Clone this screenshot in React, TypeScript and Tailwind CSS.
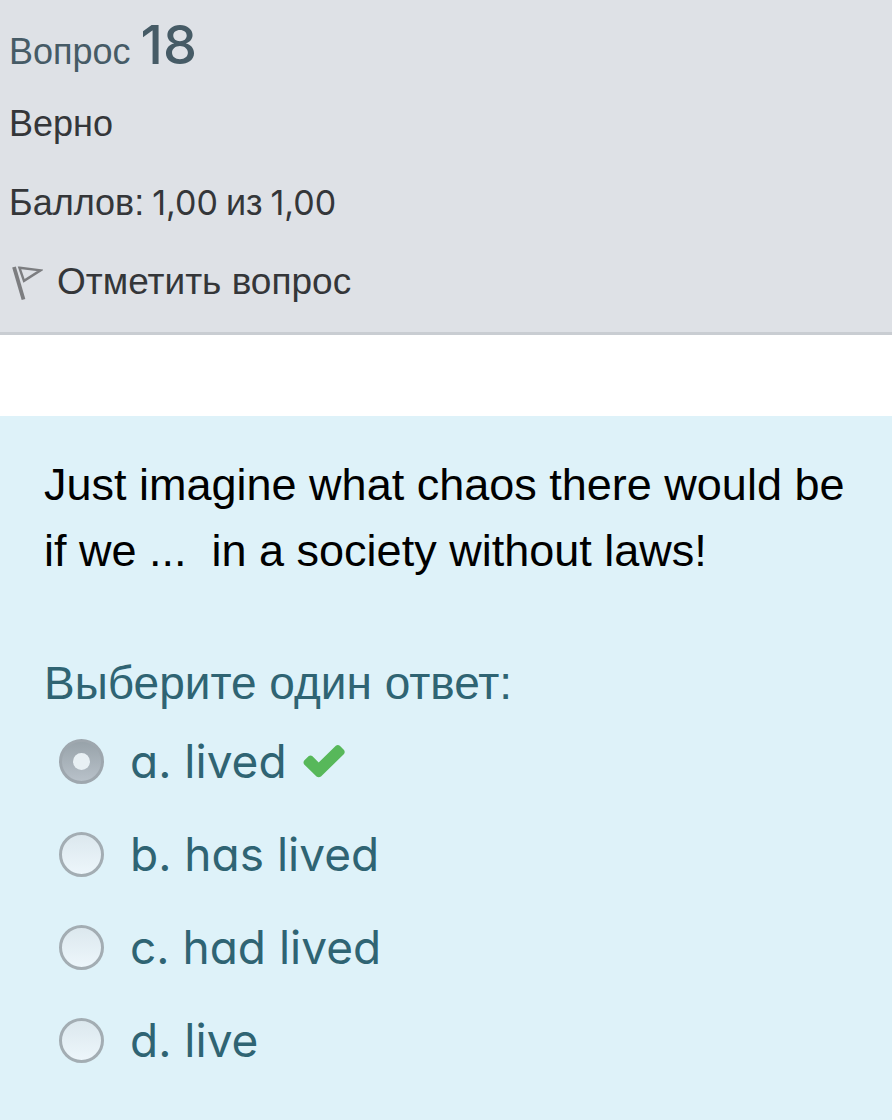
const OPTIONS = [
  { id: "a", text: "a. lived", correct: true },
  { id: "b", text: "b. has lived" },
  { id: "c", text: "c. had lived" },
  { id: "d", text: "d. live" },
];

function FlagIcon() {
  return (
    <svg viewBox="0 0 34 38" className="h-[38px] w-[34px] shrink-0" fill="none" stroke="#7c7d80" aria-hidden="true">
      <path d="M5 4L14.500 36.500" strokeWidth="3.800" />
      <path d="M10.500 4.800L31.500 7.300L15 17.800Z" strokeWidth="2.400" />
    </svg>
  );
}

function CheckIcon() {
  return (
    <svg viewBox="0 0 42 34" className="h-[34px] w-[42px] shrink-0" aria-hidden="true">
      <path
        d="M1.200 16.500L5.500 12.200Q7.500 10.600 9.500 12.200L15.700 18.400L32.800 1.800Q34.800.200 36.800 1.800L41 6Q42.400 8 41 10L18 32.500Q15.700 34 13.500 32.500L1.200 20.500Q-.200 18.500 1.200 16.500Z"
        fill="#57b85a"
      />
    </svg>
  );
}

export default function App() {
  return (
    <main className="min-h-screen bg-white font-['Liberation_Sans',sans-serif]">
      <header className="flex flex-col gap-[25px] border-b-[3px] border-[#c9cdd2] bg-[#dee1e6] px-[9px] pt-[18px] pb-[23px] text-[36px] leading-[54px] text-[#343639]">
        <h1 className="flex h-[54px] items-baseline gap-[10px] text-[#465b66]">
          Вопрос
          <span className="font-['Inter',sans-serif] text-[54px] font-medium">18</span>
        </h1>
        <p>Верно</p>
        <p className="flex items-baseline gap-2">
          <span>Баллов:</span>
          <span className="font-['Inter',sans-serif] text-[34px]">1,00</span>
          <span>из</span>
          <span className="font-['Inter',sans-serif] text-[34px]">1,00</span>
        </p>
        <a href="#flag" className="flex items-center gap-[14px] text-[37px]">
          <FlagIcon />
          Отметить вопрос
        </a>
      </header>

      <section className="mt-[81px] min-h-[704px] bg-[#def2f9] px-11 pt-9 pb-7 text-[46px] leading-[66px] text-[#2f6473]">
        <p className="whitespace-pre-wrap text-[45px] text-black">
          {"Just imagine what chaos there would be if we ...  in a society without laws!"}
        </p>
        <fieldset className="mt-[66px]">
          <legend>Выберите один ответ:</legend>
          <div className="mt-3 flex flex-col gap-[27px] pl-[15px]">
            {OPTIONS.map((o) => (
              <div key={o.id} className="flex items-center">
                <input
                  type="radio"
                  id={o.id}
                  name="answer"
                  defaultChecked={o.correct}
                  className="relative size-[45px] shrink-0 appearance-none rounded-full border-[3px] border-[#a3adb3] bg-linear-to-b from-[#dce8ee] to-[#edf6fb] checked:border-[#9ea7ae] checked:from-[#98a3aa] checked:to-[#b8c1c9] checked:before:absolute checked:before:inset-[11px] checked:before:rounded-full checked:before:bg-[#e8f0f4]"
                />
                <label
                  htmlFor={o.id}
                  className="pl-[26px] font-['Inter',sans-serif] [font-feature-settings:'cv11']"
                >
                  {o.text}
                </label>
                {o.correct && (
                  <span className="pl-4">
                    <CheckIcon />
                  </span>
                )}
              </div>
            ))}
          </div>
        </fieldset>
      </section>
    </main>
  );
}
